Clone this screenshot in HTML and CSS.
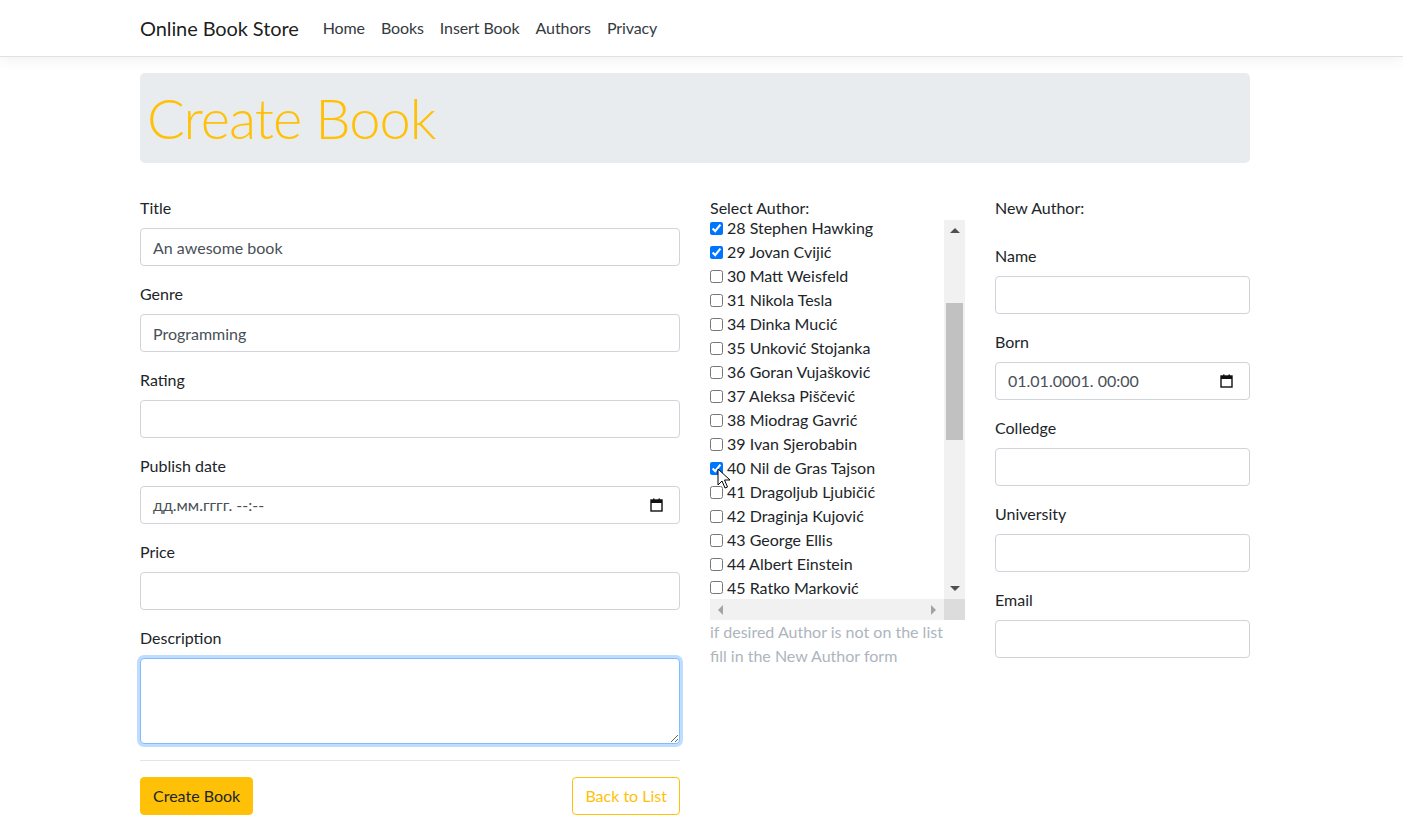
FILE: index.html
```html
<!DOCTYPE html>
<html lang="en">
<head>
<meta charset="utf-8">
<title>Create Book - Online Book Store</title>
<link rel="stylesheet" href="styles.css">
</head>
<body>
<header class="navbar">
  <div class="nav-inner">
    <a class="brand" href="#">Online Book Store</a>
    <nav class="nav-links">
      <a class="nav-link" href="#">Home</a>
      <a class="nav-link" href="#">Books</a>
      <a class="nav-link" href="#">Insert Book</a>
      <a class="nav-link" href="#">Authors</a>
      <a class="nav-link" href="#">Privacy</a>
    </nav>
  </div>
</header>

<main class="container">
  <div class="jumbotron"><h1 class="display">Create Book</h1></div>

  <div class="row">
    <form class="col-main">
      <div class="form-group">
        <label class="label">Title</label>
        <input class="form-control" type="text" value="An awesome book">
      </div>
      <div class="form-group">
        <label class="label">Genre</label>
        <input class="form-control" type="text" value="Programming">
      </div>
      <div class="form-group">
        <label class="label">Rating</label>
        <input class="form-control" type="text" value="">
      </div>
      <div class="form-group">
        <label class="label">Publish date</label>
        <div class="form-control date-control">
          <span>дд.мм.гггг. --:--</span>
          <svg class="cal-icon" width="13" height="14" viewBox="0 0 13 14"><rect x="1" y="2" width="11" height="11" fill="none" stroke="#111" stroke-width="1.4"/><rect x="1" y="2" width="11" height="3" fill="#111"/><rect x="3" y="0.5" width="1.5" height="2.5" fill="#111"/><rect x="8.5" y="0.5" width="1.5" height="2.5" fill="#111"/></svg>
        </div>
      </div>
      <div class="form-group">
        <label class="label">Price</label>
        <input class="form-control" type="text" value="">
      </div>
      <div class="form-group last">
        <label class="label">Description</label>
        <textarea class="form-control textarea focused" rows="3"></textarea>
      </div>
      <hr class="divider">
      <div class="actions">
        <button type="button" class="btn btn-warning">Create Book</button>
        <a class="btn btn-outline-warning" href="#">Back to List</a>
      </div>
    </form>

    <div class="col-authors">
      <div class="label-plain">Select Author:</div>
      <div class="listbox">
        <div class="list-row">
          <div class="list-view">
            <div class="list-items">
              <label class="item"><input type="checkbox" checked>28 Stephen Hawking</label>
              <label class="item"><input type="checkbox" checked>29 Jovan Cvijić</label>
              <label class="item"><input type="checkbox">30 Matt Weisfeld</label>
              <label class="item"><input type="checkbox">31 Nikola Tesla</label>
              <label class="item"><input type="checkbox">34 Dinka Mucić</label>
              <label class="item"><input type="checkbox">35 Unković Stojanka</label>
              <label class="item"><input type="checkbox">36 Goran Vujašković</label>
              <label class="item"><input type="checkbox">37 Aleksa Piščević</label>
              <label class="item"><input type="checkbox">38 Miodrag Gavrić</label>
              <label class="item"><input type="checkbox">39 Ivan Sjerobabin</label>
              <label class="item"><input type="checkbox" checked>40 Nil de Gras Tajson</label>
              <label class="item"><input type="checkbox">41 Dragoljub Ljubičić</label>
              <label class="item"><input type="checkbox">42 Draginja Kujović</label>
              <label class="item"><input type="checkbox">43 George Ellis</label>
              <label class="item"><input type="checkbox">44 Albert Einstein</label>
              <label class="item"><input type="checkbox">45 Ratko Marković</label>
            </div>
          </div>
          <div class="vscroll">
            <div class="arrow-up"></div>
            <div class="vtrack"><div class="vthumb"></div></div>
            <div class="arrow-down"></div>
          </div>
        </div>
        <div class="hscroll-row">
          <div class="hscroll">
            <div class="arrow-left"></div>
            <div class="arrow-right"></div>
          </div>
          <div class="corner"></div>
        </div>
      </div>
      <p class="hint">if desired Author is not on the list fill in the New Author form</p>
    </div>

    <div class="col-new">
      <div class="label-plain new-title">New Author:</div>
      <div class="form-group">
        <label class="label">Name</label>
        <input class="form-control" type="text" value="">
      </div>
      <div class="form-group">
        <label class="label">Born</label>
        <div class="form-control date-control">
          <span>01.01.0001. 00:00</span>
          <svg class="cal-icon" width="13" height="14" viewBox="0 0 13 14"><rect x="1" y="2" width="11" height="11" fill="none" stroke="#111" stroke-width="1.4"/><rect x="1" y="2" width="11" height="3" fill="#111"/><rect x="3" y="0.5" width="1.5" height="2.5" fill="#111"/><rect x="8.5" y="0.5" width="1.5" height="2.5" fill="#111"/></svg>
        </div>
      </div>
      <div class="form-group">
        <label class="label">Colledge</label>
        <input class="form-control" type="text" value="">
      </div>
      <div class="form-group">
        <label class="label">University</label>
        <input class="form-control" type="text" value="">
      </div>
      <div class="form-group">
        <label class="label">Email</label>
        <input class="form-control" type="text" value="">
      </div>
    </div>
  </div>
</main>

<svg class="cursor" width="14" height="22" viewBox="0 0 14 22"><path d="M1 1 L1 17 L5 13 L8 20 L10.5 19 L7.5 12 L13 12 Z" fill="#fff" stroke="#000" stroke-width="1" stroke-linejoin="round"/></svg>
</body>
</html>
```

FILE: styles.css
```css
* { box-sizing: border-box; }

html, body {
  margin: 0;
  background: #fff;
}

body {
  font-family: "Lato", "Open Sans", sans-serif;
  font-size: 16px;
  line-height: 1.5;
  color: #212529;
  position: relative;
  min-height: 832px;
}

a { text-decoration: none; }

.navbar {
  height: 57px;
  border-bottom: 1px solid #dee2e6;
  box-shadow: 0 4px 12px rgba(0, 0, 0, 0.05);
  display: flex;
  align-items: center;
  background: #fff;
}

.nav-inner {
  margin-left: 140px;
  display: flex;
  align-items: center;
}

.brand {
  font-size: 20px;
  line-height: 30px;
  color: rgba(0, 0, 0, 0.9);
  margin-right: 16px;
  letter-spacing: -0.1px;
}

.nav-links { display: flex; }

.nav-link {
  padding: 8px;
  color: #343a40;
  letter-spacing: -0.1px;
}

.container {
  width: 1110px;
  margin-left: 140px;
  padding-top: 16px;
}

.jumbotron {
  background: #e9ecef;
  border-radius: 5px;
  height: 90px;
  padding: 11px 7px;
  margin-bottom: 33px;
}

.display {
  margin: 0;
  font-size: 56px;
  font-weight: 300;
  line-height: 1.2;
  color: #ffc107;
  letter-spacing: -1px;
}

.row {
  display: grid;
  grid-template-columns: 540px 255px 255px;
  column-gap: 30px;
  align-items: start;
}

.form-group { margin-bottom: 16px; }
.form-group.last { margin-bottom: 0; }

.label, .label-plain {
  display: block;
  margin-bottom: 8px;
  line-height: 24px;
}

.label-plain { margin-bottom: 0; }
.new-title { margin-bottom: 24px; }

.form-control {
  display: block;
  width: 100%;
  height: 38px;
  padding: 6px 12px;
  font-family: inherit;
  font-size: 16px;
  line-height: 24px;
  color: #495057;
  background: #fff;
  border: 1px solid #ced4da;
  border-radius: 4px;
  outline: none;
}

.date-control {
  display: flex;
  align-items: center;
  justify-content: space-between;
  padding-right: 16px;
}

.cal-icon { display: block; }

.textarea {
  height: 86px;
  resize: vertical;
}

.focused {
  border-color: #80bdff;
  box-shadow: 0 0 0 3px rgba(0, 123, 255, 0.25);
}

.divider {
  margin: 16px 0;
  border: 0;
  border-top: 1px solid rgba(0, 0, 0, 0.1);
}

.actions {
  display: flex;
  justify-content: space-between;
}

.btn {
  display: inline-block;
  height: 38px;
  padding: 6px 12px;
  font-family: inherit;
  font-size: 16px;
  line-height: 24px;
  border: 1px solid transparent;
  border-radius: 4px;
  cursor: pointer;
}

.btn-warning {
  background: #ffc107;
  border-color: #ffc107;
  color: #212529;
}

.btn-outline-warning {
  background: #fff;
  border-color: #ffc107;
  color: #ffc107;
}

/* author list box */
.listbox {
  width: 255px;
  height: 400px;
  display: flex;
  flex-direction: column;
}

.list-row {
  display: flex;
  height: 379px;
}

.list-view {
  flex: 1;
}

.item {
  display: flex;
  align-items: center;
  height: 24px;
  white-space: nowrap;
}

.item:first-child {
  height: 20px;
  padding-bottom: 4px;
  line-height: 16px;
}

.item:last-child {
  height: 23px;
}

.item input {
  width: 13px;
  height: 13px;
  margin: 0 4px 0 0;
}

.vscroll {
  width: 21px;
  background: #f1f1f1;
  display: flex;
  flex-direction: column;
  align-items: center;
}

.arrow-up, .arrow-down {
  width: 0;
  height: 0;
  border-left: 5px solid transparent;
  border-right: 5px solid transparent;
  margin: 8px 0;
}

.arrow-up { border-bottom: 5px solid #505050; }
.arrow-down { border-top: 5px solid #505050; }

.vtrack {
  flex: 1;
  width: 100%;
  padding: 62px 2px 0;
}

.vthumb {
  height: 137px;
  background: #c1c1c1;
}

.hscroll-row {
  display: flex;
  height: 21px;
}

.hscroll {
  flex: 1;
  background: #f1f1f1;
  display: flex;
  align-items: center;
  justify-content: space-between;
  padding: 0 8px;
}

.arrow-left, .arrow-right {
  width: 0;
  height: 0;
  border-top: 5px solid transparent;
  border-bottom: 5px solid transparent;
}

.arrow-left { border-right: 5px solid #a3a3a3; }
.arrow-right { border-left: 5px solid #a3a3a3; }

.corner {
  width: 21px;
  background: #dcdcdc;
}

.hint {
  margin: 0;
  max-width: 240px;
  color: #adb5bd;
  line-height: 24px;
}

.cursor {
  position: absolute;
  left: 717px;
  top: 468px;
}
```
